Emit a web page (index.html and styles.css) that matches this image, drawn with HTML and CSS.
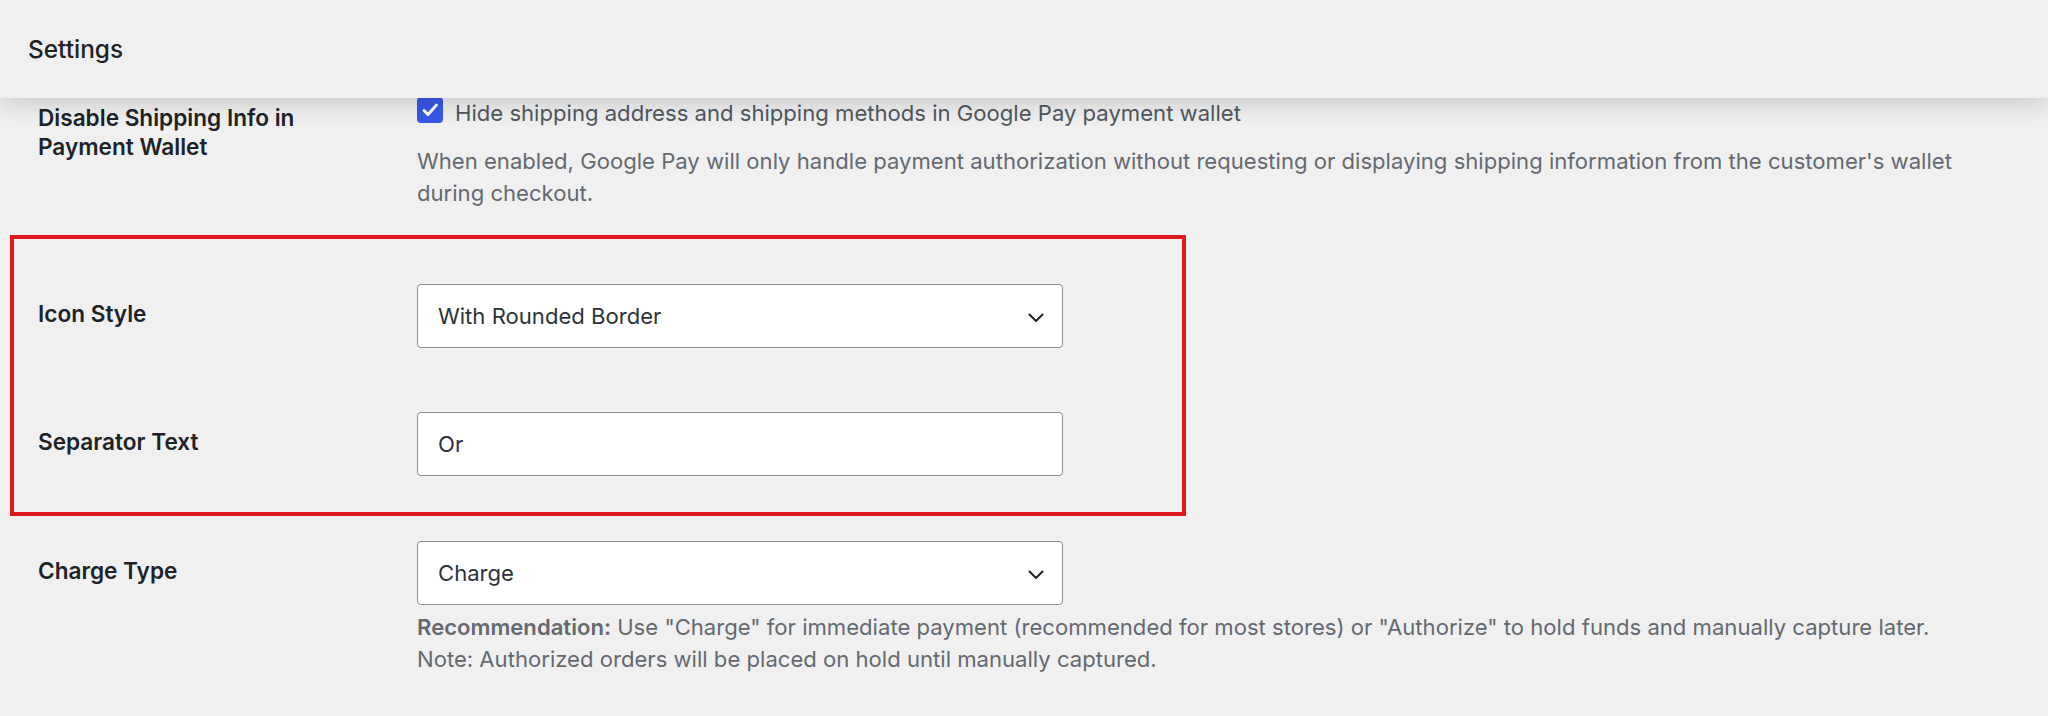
FILE: index.html
```html
<!DOCTYPE html>
<html lang="en">
<head>
<meta charset="utf-8">
<title>Settings</title>
<link rel="stylesheet" href="styles.css">
</head>
<body>
<header class="topbar">
  <h1 class="topbar-title">Settings</h1>
</header>
<main class="settings">
  <div class="row row-wallet">
    <div class="row-label">Disable Shipping Info in Payment Wallet</div>
    <div class="row-field">
      <label class="check">
        <span class="check-box">
          <svg viewBox="0 0 26 26" width="26" height="26"><path d="M7 13.5l4 4L19.5 8" fill="none" stroke="#fff" stroke-width="3" stroke-linecap="round" stroke-linejoin="round"/></svg>
        </span>
        <span class="check-text">Hide shipping address and shipping methods in Google Pay payment wallet</span>
      </label>
      <p class="desc desc-wallet">When enabled, Google Pay will only handle payment authorization without requesting or displaying shipping information from the customer's wallet during checkout.</p>
    </div>
  </div>

  <div class="highlight">
    <div class="row row-icon">
      <div class="row-label row-label-ctl">Icon Style</div>
      <div class="row-field">
        <div class="control select">
          <span class="control-text">With Rounded Border</span>
          <svg class="chevron" viewBox="0 0 16 10" width="16" height="10"><path d="M1.5 1.5L8 8l6.5-6.5" fill="none" stroke="#1d2327" stroke-width="2" stroke-linecap="round" stroke-linejoin="round"/></svg>
        </div>
      </div>
    </div>
    <div class="row row-sep">
      <div class="row-label row-label-ctl">Separator Text</div>
      <div class="row-field">
        <div class="control input">
          <span class="control-text">Or</span>
        </div>
      </div>
    </div>
  </div>

  <div class="row row-charge">
    <div class="row-label row-label-ctl">Charge Type</div>
    <div class="row-field">
      <div class="control select">
        <span class="control-text">Charge</span>
        <svg class="chevron" viewBox="0 0 16 10" width="16" height="10"><path d="M1.5 1.5L8 8l6.5-6.5" fill="none" stroke="#1d2327" stroke-width="2" stroke-linecap="round" stroke-linejoin="round"/></svg>
      </div>
      <p class="desc desc-charge"><strong>Recommendation:</strong> Use "Charge" for immediate payment (recommended for most stores) or "Authorize" to hold funds and manually capture later.<br>Note: Authorized orders will be placed on hold until manually captured.</p>
    </div>
  </div>
</main>
</body>
</html>
```
FILE: styles.css
```css
* { box-sizing: border-box; }

html, body {
  margin: 0;
  padding: 0;
  background: #f0f0f1;
  font-family: Inter, "Noto Sans", "Liberation Sans", sans-serif;
  color: #1d2327;
  overflow: hidden;
}

.topbar {
  position: relative;
  z-index: 2;
  height: 98px;
  background: #f0f0f0;
  display: flex;
  align-items: center;
  padding-left: 28px;
  box-shadow: 0 6px 22px rgba(0, 0, 0, 0.16);
}

.topbar-title {
  margin: 0;
  font-size: 24.4px;
  font-weight: 500;
  line-height: 30px;
  color: #1d2327;
}

.settings {
  padding: 0 38px;
}

.row {
  display: flex;
  align-items: flex-start;
}

.row-label {
  flex: 0 0 379px;
  padding-right: 70px;
  font-size: 22.6px;
  font-weight: 600;
  line-height: 29px;
  color: #1d2327;
}

.row-field {
  flex: 1 1 auto;
  min-width: 0;
}

.row-wallet .row-label {
  margin-top: 5px;
}

.row-wallet .row-field {
  margin-top: -1px;
}

.check {
  display: flex;
  align-items: flex-start;
  gap: 12px;
  font-size: 22.1px;
  line-height: 32px;
  color: #50575e;
}

.check-box {
  flex: 0 0 26px;
  width: 26px;
  height: 26px;
  border-radius: 4px;
  background: #3858e9;
  display: flex;
}

.desc {
  margin: 0;
  font-size: 22.1px;
  line-height: 32px;
  color: #646970;
}

.desc-wallet {
  margin-top: 16px;
}

.desc strong {
  font-weight: 600;
}

.highlight {
  margin: 26px 0 0 -28px;
  width: 1176px;
  border: 4px solid #dd1a1c;
  padding: 45px 0 36px 24px;
}

.row-sep {
  margin-top: 64px;
}

.row-label-ctl {
  margin-top: 15px;
}

.control {
  width: 646px;
  height: 64px;
  background: #fff;
  border: 1.5px solid #8c8f94;
  border-radius: 4px;
  display: flex;
  align-items: center;
  padding: 0 18px 0 20px;
  font-size: 22.1px;
  color: #2c3338;
}

.control-text {
  flex: 1 1 auto;
}

.chevron {
  flex: 0 0 16px;
  margin-top: 4px;
}

.row-charge {
  margin-top: 25px;
}

.desc-charge {
  margin-top: 6px;
}
```
